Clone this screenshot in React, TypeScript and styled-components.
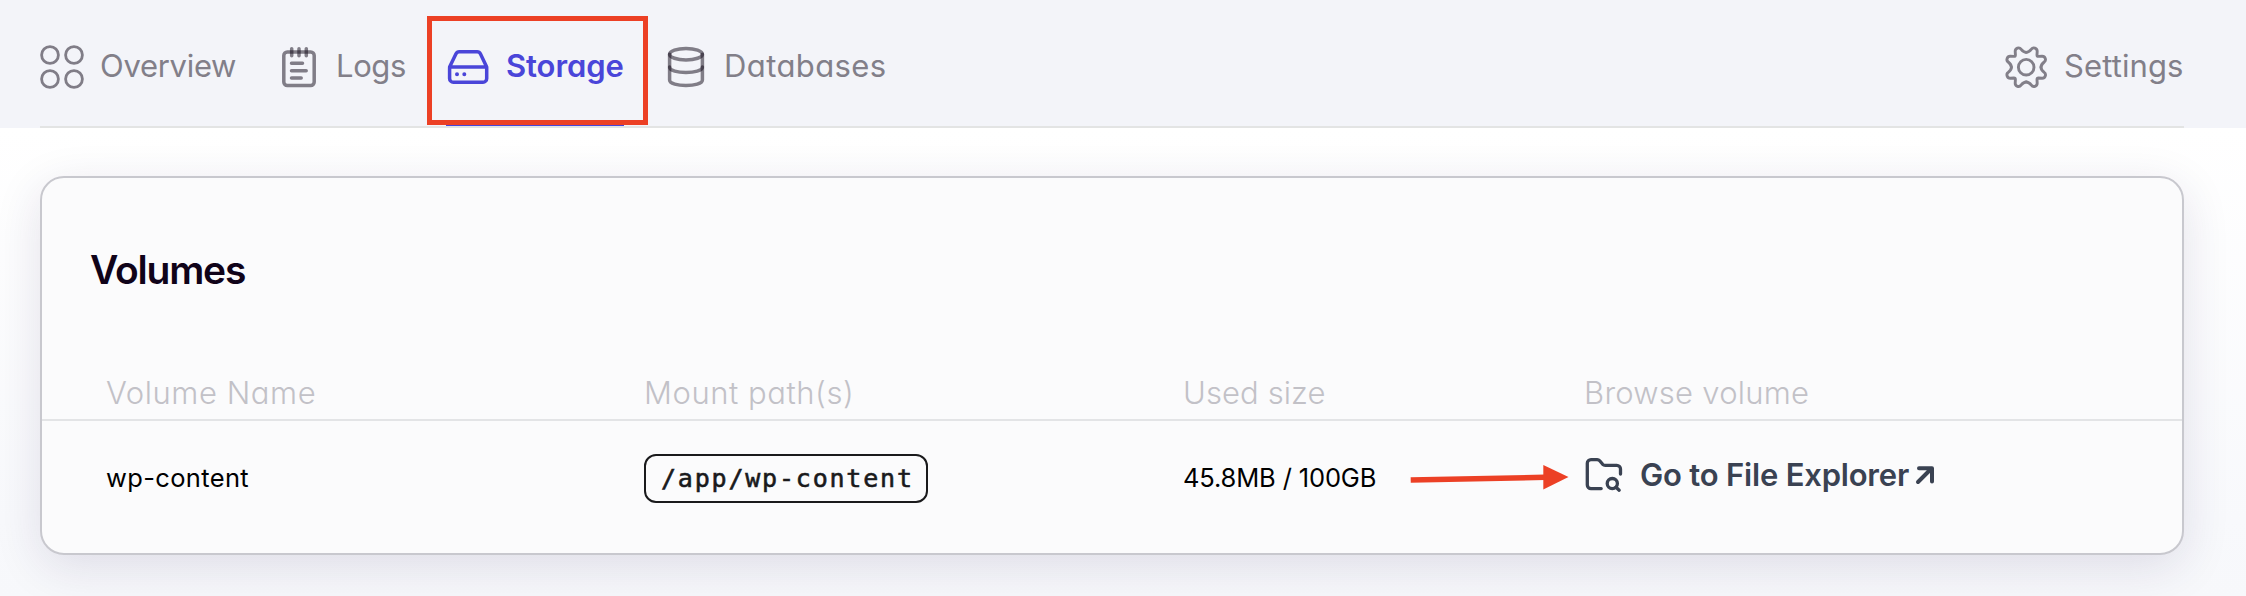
import React from "react";
import styled, { createGlobalStyle } from "styled-components";

const GlobalStyle = createGlobalStyle`
  * { box-sizing: border-box; }
  body { margin: 0; background: #fff; font-family: Inter, "Liberation Sans", sans-serif; font-feature-settings: "cv11"; }
`;

const Page = styled.div`
  position: relative;
  height: 596px;
  overflow: hidden;
  background: linear-gradient(180deg, #ffffff 128px, #f8f9fc 520px, #f7f8fb 596px);
`;

const Header = styled.header`
  height: 128px;
  padding: 0 62px 0 40px;
  background: #f3f4f9;
`;

const Nav = styled.nav`
  display: flex;
  gap: 40px;
  height: 128px;
  border-bottom: 2px solid #e3e4e4;
`;

const NavItem = styled.a<{ $width: number; $active?: boolean; $end?: boolean; $spacing: number }>`
  display: flex;
  align-items: center;
  gap: 16px;
  width: ${(p) => p.$width}px;
  height: 126px;
  padding-top: 10px;
  margin-left: ${(p) => (p.$end ? "auto" : "0")};
  border-bottom: ${(p) => (p.$active ? "2px solid #4a45d9" : "0")};
  padding-bottom: ${(p) => (p.$active ? "0" : "2px")};
  color: ${(p) => (p.$active ? "#4a45d9" : "#827f89")};
  font-size: 31px;
  font-weight: ${(p) => (p.$active ? 600 : 400)};
  letter-spacing: ${(p) => p.$spacing}px;
  line-height: 40px;
  white-space: nowrap;
`;

const NavLabel = styled.span`
  padding-bottom: 2px;
`;

const NavIcon = styled.svg<{ $active?: boolean }>`
  flex: none;
  width: 44px;
  height: 44px;
  fill: none;
  stroke: ${(p) => (p.$active ? "#4a45d9" : "rgba(17, 10, 25, 0.51)")};
  stroke-width: 3.5;
  stroke-linecap: round;
  stroke-linejoin: round;
`;

const Card = styled.section`
  margin: 48px 62px 0 40px;
  height: 379px;
  border: 2px solid #c8c8ce;
  border-radius: 24px;
  background: #fbfbfc;
  box-shadow: 0 12px 48px rgba(40, 28, 80, 0.12);
`;

const Title = styled.h2`
  margin: 0;
  padding: 67px 0 0 48px;
  height: 188px;
  color: #100319;
  font-size: 39px;
  font-weight: 600;
  letter-spacing: -1.2px;
  line-height: 50px;
`;

const Row = styled.div<{ $head?: boolean }>`
  display: grid;
  grid-template-columns: 538px 539px 401px 1fr;
  align-items: center;
  padding-left: 64px;
  height: ${(p) => (p.$head ? 55 : 114)}px;
  border-bottom: ${(p) => (p.$head ? "2px solid #e3e4e6" : "0")};
`;

const HeadCell = styled.span<{ $spacing: number }>`
  color: #c2c1c7;
  font-size: 31px;
  font-weight: 300;
  line-height: 52px;
  letter-spacing: ${(p) => p.$spacing}px;
`;

const Cell = styled.span<{ $spacing: number }>`
  color: #000;
  font-size: 25.5px;
  line-height: 36px;
  letter-spacing: ${(p) => p.$spacing}px;
`;

const PathChip = styled.code`
  justify-self: start;
  width: 284px;
  height: 49px;
  padding-left: 15px;
  border: 2px solid #1a1a1c;
  border-radius: 12px;
  color: #1a1a1c;
  font-family: "DejaVu Sans Mono", "Liberation Mono", monospace;
  font-size: 25px;
  letter-spacing: 1.8px;
  line-height: 45px;
  -webkit-text-stroke: 0.6px #1a1a1c;
`;

const ExplorerLink = styled.a`
  display: flex;
  align-items: center;
  padding-bottom: 7px;
  color: #3a4252;
  font-size: 31px;
  font-weight: 600;
  letter-spacing: -0.2px;
  white-space: nowrap;
`;

const FolderGlyph = styled.svg`
  width: 40px;
  height: 40px;
  margin: 0 16px 2px 0;
  fill: none;
  stroke: #3a4252;
  stroke-width: 3.3;
  stroke-linecap: round;
  stroke-linejoin: round;
`;

const ExternalGlyph = styled.svg`
  width: 20px;
  height: 20px;
  margin-left: 6px;
  fill: none;
  stroke: #3a4252;
  stroke-width: 4;
  stroke-linecap: round;
  stroke-linejoin: round;
`;

const HighlightBox = styled.div`
  position: absolute;
  left: 427px;
  top: 16px;
  width: 221px;
  height: 109px;
  border: 5px solid #ec4025;
`;

const PointerArrow = styled.svg`
  position: absolute;
  left: 1408px;
  top: 462px;
  width: 164px;
  height: 32px;
`;

const gearQuarter =
  "M0-14.8C2.5-14.8 4-16.5 5.2-18C7-20.5 11-19 11-16L10.8-12.3Q10.8-10.8 12.3-10.8L16-11C19-11 20.5-7 18-5.2C16.5-4 14.8-2.5 14.8 0";

export default function App() {
  return (
    <Page>
      <GlobalStyle />
      <Header>
        <Nav>
          <NavItem $width={196} $spacing={-0.3}>
            <NavIcon viewBox="0 0 44 44">
              <circle cx="10" cy="10" r="8.4" strokeWidth="2.8" />
              <circle cx="34" cy="10" r="8.4" strokeWidth="2.8" />
              <circle cx="10" cy="34" r="8.4" strokeWidth="2.8" />
              <circle cx="34" cy="34" r="8.4" strokeWidth="2.8" />
            </NavIcon>
            <NavLabel>Overview</NavLabel>
          </NavItem>
          <NavItem $width={130} $spacing={-0.4}>
            <NavIcon viewBox="0 0 44 44">
              <rect x="7.8" y="6.9" width="30.4" height="33.6" rx="3.5" />
              <path d="M15.7 3.7V10.8" />
              <path d="M23 3.7V10.8" />
              <path d="M30.3 3.7V10.8" />
              <path d="M15.5 18.3H26.5M15.5 25.7H30.2M15.5 33H25.2" />
            </NavIcon>
            <NavLabel>Logs</NavLabel>
          </NavItem>
          <NavItem $width={178} $spacing={-0.1} $active>
            <NavIcon viewBox="0 0 44 44" $active>
              <path d="M3.6 22H40.7V33.5a3.7 3.7 0 0 1-3.7 3.7H7.3a3.7 3.7 0 0 1-3.7-3.7ZM3.6 22 10 8.8Q11 6.8 13.2 6.8H31.2Q33.4 6.8 34.4 8.8L40.7 22" />
              <path d="M11 29.3h.01M18.3 29.3h.01" strokeWidth="4" />
            </NavIcon>
            <NavLabel>Storage</NavLabel>
          </NavItem>
          <NavItem $width={162} $spacing={0.4}>
            <NavIcon viewBox="0 0 44 44">
              <ellipse cx="22" cy="9.2" rx="16.4" ry="5.7" />
              <path d="M5.6 9.2V35C5.6 42.3 38.4 42.3 38.4 35V9.2" />
              <path d="M5.6 22C5.6 29.3 38.4 29.3 38.4 22" />
            </NavIcon>
            <NavLabel>Databases</NavLabel>
          </NavItem>
          <NavItem $width={180} $spacing={0.1} $end>
            <NavIcon viewBox="0 0 44 44">
              <g transform="translate(22.2 22.2)" strokeWidth="2.9" stroke="#827f89">
                <circle r="7.8" />
                {[0, 90, 180, 270].map((a) => (
                  <path key={a} d={gearQuarter} transform={`rotate(${a})`} />
                ))}
              </g>
            </NavIcon>
            <NavLabel>Settings</NavLabel>
          </NavItem>
        </Nav>
      </Header>
      <Card>
        <Title>Volumes</Title>
        <Row $head>
          <HeadCell $spacing={0.55}>Volume Name</HeadCell>
          <HeadCell $spacing={0.55}>Mount path(s)</HeadCell>
          <HeadCell $spacing={0.1}>Used size</HeadCell>
          <HeadCell $spacing={0.25}>Browse volume</HeadCell>
        </Row>
        <Row>
          <Cell $spacing={0.35}>wp-content</Cell>
          <PathChip>/app/wp-content</PathChip>
          <Cell $spacing={-0.15}>45.8MB / 100GB</Cell>
          <ExplorerLink>
            <FolderGlyph viewBox="0 0 40 40">
              <path d="M17.2 34.6H7A3.7 3.7 0 0 1 3.3 30.9V9.3A3.7 3.7 0 0 1 7 5.6H13.2Q14.7 5.6 15.7 6.8L18.7 10.3Q19.7 11.3 21.2 11.3H32.8A3.7 3.7 0 0 1 36.5 15V20" />
              <circle cx="28.3" cy="29.6" r="5.1" />
              <path d="M32 33.2 35.2 36.2" />
            </FolderGlyph>
            <span>Go to File Explorer</span>
            <ExternalGlyph viewBox="0 0 20 20">
              <path d="M3 17 16 4M4 3.3H17V16.5" />
            </ExternalGlyph>
          </ExplorerLink>
        </Row>
      </Card>
      <HighlightBox />
      <PointerArrow viewBox="0 0 164 32">
        <path d="M2.7 18 137 15.3" stroke="#ec4025" strokeWidth="5.4" />
        <path d="M135.3 3V27.6L160.5 15Z" fill="#ec4025" />
      </PointerArrow>
    </Page>
  );
}
